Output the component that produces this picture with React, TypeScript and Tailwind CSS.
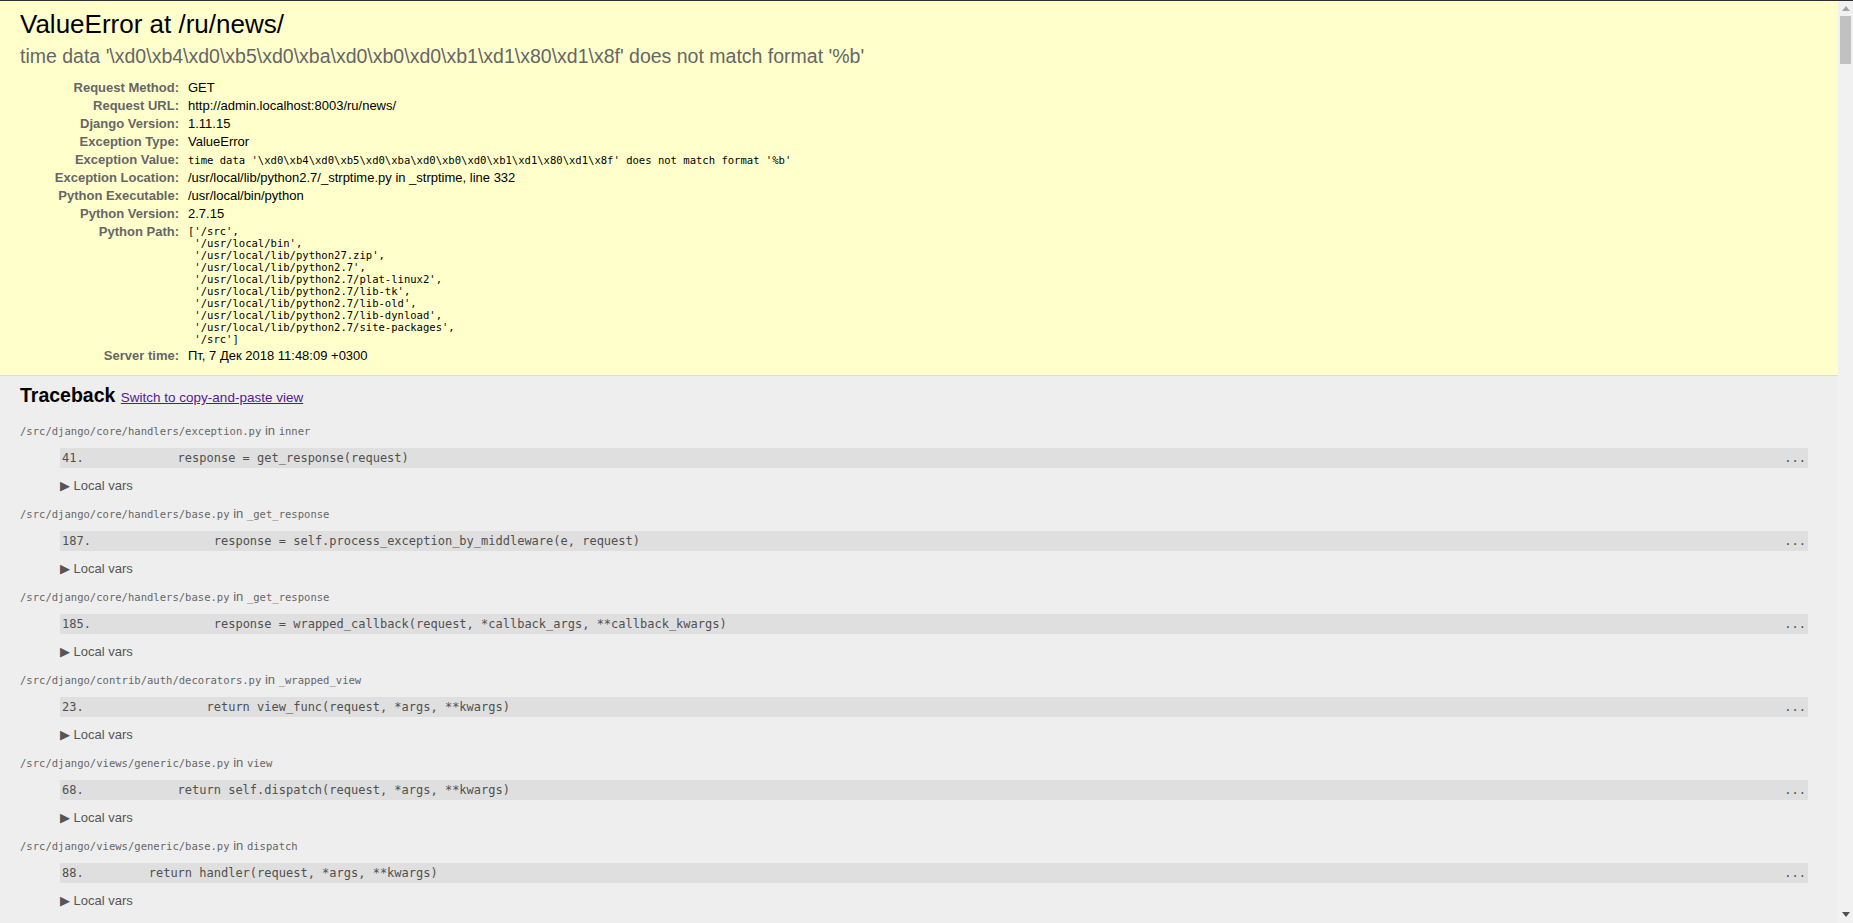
const sans = "font-['Liberation_Sans',Arial,sans-serif]";
const mono = "font-['DejaVu_Sans_Mono',monospace]";

const excValue =
  "time data '\\xd0\\xb4\\xd0\\xb5\\xd0\\xba\\xd0\\xb0\\xd0\\xb1\\xd1\\x80\\xd1\\x8f' does not match format '%b'";

const pythonPath = [
  "['/src',",
  " '/usr/local/bin',",
  " '/usr/local/lib/python27.zip',",
  " '/usr/local/lib/python2.7',",
  " '/usr/local/lib/python2.7/plat-linux2',",
  " '/usr/local/lib/python2.7/lib-tk',",
  " '/usr/local/lib/python2.7/lib-old',",
  " '/usr/local/lib/python2.7/lib-dynload',",
  " '/usr/local/lib/python2.7/site-packages',",
  " '/src']",
].join("\n");

// summary rows: label, value, is the value preformatted
const rows: { label: string; value: string; pre?: boolean }[] = [
  { label: "Request Method:", value: "GET" },
  { label: "Request URL:", value: "http://admin.localhost:8003/ru/news/" },
  { label: "Django Version:", value: "1.11.15" },
  { label: "Exception Type:", value: "ValueError" },
  { label: "Exception Value:", value: excValue, pre: true },
  {
    label: "Exception Location:",
    value: "/usr/local/lib/python2.7/_strptime.py in _strptime, line 332",
  },
  { label: "Python Executable:", value: "/usr/local/bin/python" },
  { label: "Python Version:", value: "2.7.15" },
  { label: "Python Path:", value: pythonPath, pre: true },
  { label: "Server time:", value: "Пт, 7 Дек 2018 11:48:09 +0300" },
];

const frames = [
  {
    file: "/src/django/core/handlers/exception.py",
    fn: "inner",
    line: 41,
    code: "            response = get_response(request)",
  },
  {
    file: "/src/django/core/handlers/base.py",
    fn: "_get_response",
    line: 187,
    code: "                response = self.process_exception_by_middleware(e, request)",
  },
  {
    file: "/src/django/core/handlers/base.py",
    fn: "_get_response",
    line: 185,
    code: "                response = wrapped_callback(request, *callback_args, **callback_kwargs)",
  },
  {
    file: "/src/django/contrib/auth/decorators.py",
    fn: "_wrapped_view",
    line: 23,
    code: "                return view_func(request, *args, **kwargs)",
  },
  {
    file: "/src/django/views/generic/base.py",
    fn: "view",
    line: 68,
    code: "            return self.dispatch(request, *args, **kwargs)",
  },
  {
    file: "/src/django/views/generic/base.py",
    fn: "dispatch",
    line: 88,
    code: "        return handler(request, *args, **kwargs)",
  },
];

const Summary = () => (
  <div className="bg-[#ffffcc] border-b border-[#dddddd] px-5 pt-2 pb-[10px]">
    <h1 className="text-[26px] leading-[30px] font-normal text-black">
      ValueError at /ru/news/
    </h1>
    <h2 className="mt-[5px] mb-[11px] text-[19.5px] leading-[24px] font-normal text-[#666666]">
      {excValue}
    </h2>
    <div className="flex flex-col">
      {rows.map((r) => (
        <div key={r.label} className="flex items-start">
          <div className="w-[159px] shrink-0 text-right font-bold text-[#666666] py-[2px] leading-[14px]">
            {r.label}
          </div>
          <div className="pl-[9px] py-[2px] text-black">
            {r.pre ? (
              <pre
                className={`${mono} text-[10.5625px] whitespace-pre ${
                  r.label === "Python Path:" ? "leading-[12px]" : "leading-[14px]"
                }`}
              >
                {r.value}
              </pre>
            ) : (
              <span className="leading-[14px] block">{r.value}</span>
            )}
          </div>
        </div>
      ))}
    </div>
  </div>
);

const Traceback = () => (
  <div className="bg-[#eeeeee] px-5 pt-[7px] pb-[10px]">
    <h2 className="text-[19.5px] leading-[24px] font-bold text-black mb-[13px]">
      Traceback{" "}
      <a href="#" className="text-[13.5px] font-normal text-[#551a8b] underline">
        Switch to copy-and-paste view
      </a>
    </h2>
    <ul className="text-[#222222]">
      {frames.map((f, i) => (
        <li key={i} className="pb-[13px] text-[#666666]">
          <div className="leading-[15px]">
            <code className={`${mono} text-[10.5625px] leading-[12px]`}>{f.file}</code> in{" "}
            <code className={`${mono} text-[10.5625px] leading-[12px]`}>{f.fn}</code>
          </div>
          <div className="py-[10px]">
            <div
              className={`${mono} ml-[40px] mr-[10px] bg-[#dfdfdf] text-[#505050] px-[2px] py-[3px] text-[12px] leading-[14px] flex justify-between`}
            >
              <span className="whitespace-pre">
                {f.line}. {f.code}
              </span>
              <span>...</span>
            </div>
          </div>
          <div className="ml-[40px] leading-[15px]">
            <a href="#" className="text-[#555555] no-underline">
              <span>&#x25b6;</span> Local vars
            </a>
          </div>
        </li>
      ))}
    </ul>
  </div>
);

const Scrollbar = () => (
  <div className="w-[15px] shrink-0 bg-[#f1f1f1] flex flex-col items-center">
    <svg className="mt-[5px]" width="8" height="5" viewBox="0 0 8 5">
      <path d="M4 0 L8 5 L0 5 Z" fill="#a3a3a3" />
    </svg>
    <div className="mt-[5px] w-[11px] h-[48px] bg-[#c1c1c1]" />
    <div className="flex-1" />
    <svg className="mb-[6px]" width="8" height="5" viewBox="0 0 8 5">
      <path d="M0 0 L8 0 L4 5 Z" fill="#505050" />
    </svg>
  </div>
);

export default function App() {
  return (
    <div className={`${sans} h-screen w-full overflow-hidden flex flex-col bg-[#eeeeee] text-[13px] text-black`}>
      <div className="h-px shrink-0 bg-[#2e2e2e]" />
      <div className="flex flex-1 min-h-0">
        <div className="flex-1 min-w-0 overflow-hidden">
          <Summary />
          <Traceback />
        </div>
        <Scrollbar />
      </div>
    </div>
  );
}
